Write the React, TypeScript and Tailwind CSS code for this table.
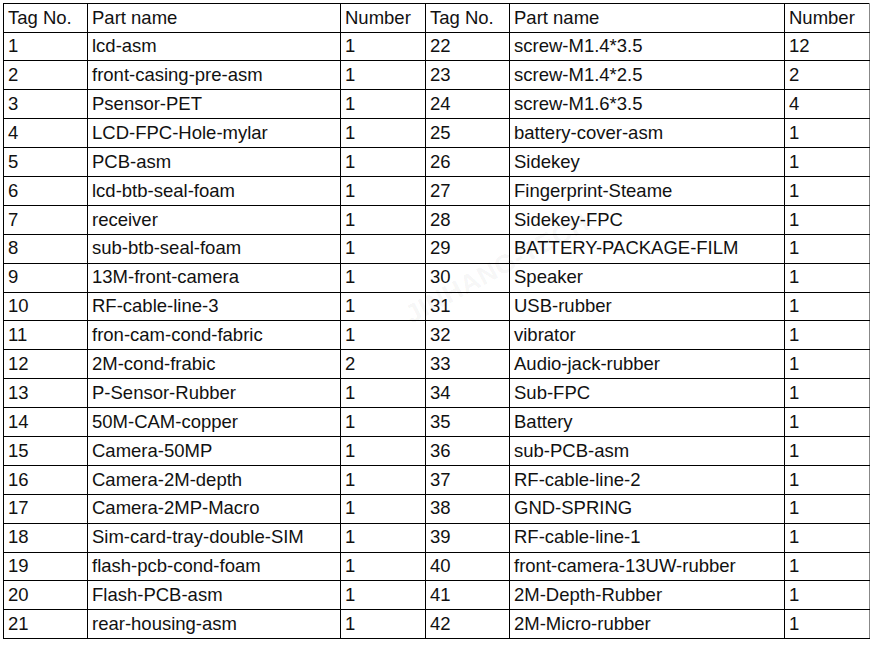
import React from 'react';

type Row = [string, string, string, string, string, string];

const rows: Row[] = [
  ['1', 'lcd-asm', '1', '22', 'screw-M1.4*3.5', '12'],
  ['2', 'front-casing-pre-asm', '1', '23', 'screw-M1.4*2.5', '2'],
  ['3', 'Psensor-PET', '1', '24', 'screw-M1.6*3.5', '4'],
  ['4', 'LCD-FPC-Hole-mylar', '1', '25', 'battery-cover-asm', '1'],
  ['5', 'PCB-asm', '1', '26', 'Sidekey', '1'],
  ['6', 'lcd-btb-seal-foam', '1', '27', 'Fingerprint-Steame', '1'],
  ['7', 'receiver', '1', '28', 'Sidekey-FPC', '1'],
  ['8', 'sub-btb-seal-foam', '1', '29', 'BATTERY-PACKAGE-FILM', '1'],
  ['9', '13M-front-camera', '1', '30', 'Speaker', '1'],
  ['10', 'RF-cable-line-3', '1', '31', 'USB-rubber', '1'],
  ['11', 'fron-cam-cond-fabric', '1', '32', 'vibrator', '1'],
  ['12', '2M-cond-frabic', '2', '33', 'Audio-jack-rubber', '1'],
  ['13', 'P-Sensor-Rubber', '1', '34', 'Sub-FPC', '1'],
  ['14', '50M-CAM-copper', '1', '35', 'Battery', '1'],
  ['15', 'Camera-50MP', '1', '36', 'sub-PCB-asm', '1'],
  ['16', 'Camera-2M-depth', '1', '37', 'RF-cable-line-2', '1'],
  ['17', 'Camera-2MP-Macro', '1', '38', 'GND-SPRING', '1'],
  ['18', 'Sim-card-tray-double-SIM', '1', '39', 'RF-cable-line-1', '1'],
  ['19', 'flash-pcb-cond-foam', '1', '40', 'front-camera-13UW-rubber', '1'],
  ['20', 'Flash-PCB-asm', '1', '41', '2M-Depth-Rubber', '1'],
  ['21', 'rear-housing-asm', '1', '42', '2M-Micro-rubber', '1'],
];

const header: Row = ['Tag No.', 'Part name', 'Number', 'Tag No.', 'Part name', 'Number'];

const cell = 'border border-black px-[4px] py-0 text-left align-middle whitespace-nowrap overflow-hidden';

export default function App() {
  return (
    <div className="relative w-[878px] h-[645px] bg-white pl-[3px] pt-[3px] font-['Liberation_Sans',Arial,sans-serif] text-[18.5px] leading-none text-[#111]">
      <table className="table-fixed border-collapse w-[866px]">
        <colgroup>
          <col className="w-[84px]" />
          <col className="w-[253px]" />
          <col className="w-[85px]" />
          <col className="w-[84px]" />
          <col className="w-[275px]" />
          <col className="w-[85px]" />
        </colgroup>
        <thead>
          <tr className="h-[28.5px]">
            {header.map((h, i) => (
              <th key={i} className={`${cell} font-normal ${i === 5 ? 'border-r-[#888]' : ''}`}>
                {h}
              </th>
            ))}
          </tr>
        </thead>
        <tbody>
          {rows.map((r) => (
            <tr key={r[0]} className="h-[28.9px]">
              {r.map((c, i) => (
                <td key={i} className={`${cell} ${i === 5 ? 'border-r-[#888]' : ''}`}>
                  {c}
                </td>
              ))}
            </tr>
          ))}
        </tbody>
      </table>

      {/* faint watermark */}
      <div className="pointer-events-none absolute left-[395px] top-[255px] -rotate-[28deg] text-[26px] font-bold tracking-wide text-black/[0.05]">
        JINHANG-TECH
      </div>
    </div>
  );
}
